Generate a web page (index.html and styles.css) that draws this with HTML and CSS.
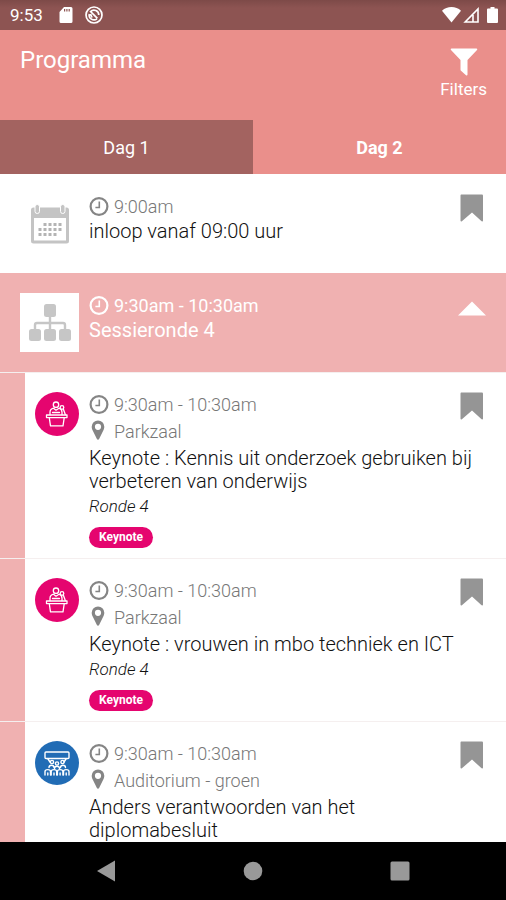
FILE: index.html
```html
<!DOCTYPE html>
<html lang="nl">
<head>
<meta charset="utf-8">
<meta name="viewport" content="width=device-width, initial-scale=1">
<title>Programma</title>
<link rel="stylesheet" href="styles.css">
</head>
<body>
<svg class="sprite" aria-hidden="true">
  <symbol id="clock" viewBox="0 0 20 20"><circle cx="10" cy="9.500" r="8.400" fill="none" stroke="currentColor" stroke-width="2.200"/><path d="M10.300 4.500v6H6.400" fill="none" stroke="currentColor" stroke-width="1.600"/></symbol>
  <symbol id="pin" viewBox="0 0 20 20"><path fill="currentColor" fill-rule="evenodd" d="M9 .5a6.300 6.300 0 0 1 6.300 6.300c0 1.600-.5 2.700-1 3.700L10.100 19c-.4 1-1.800 1-2.200 0L3.700 10.500c-.5-1-1-2.100-1-3.700A6.300 6.300 0 0 1 9 .5zm0 3.200a3.100 3.100 0 1 0 0 6.200 3.100 3.100 0 0 0 0-6.200z"/></symbol>
  <symbol id="bookmark" viewBox="0 0 24 28"><path fill="currentColor" d="M1.500.5h20.200c.8 0 1.300.5 1.300 1.300v24.600c0 .9-1 1.300-1.700.7L12 18.500 2.200 27.100C1.500 27.700.5 27.300.5 26.400V1.800C.5 1 .8.500 1.500.5z"/></symbol>
  <symbol id="speaker" viewBox="0 0 44 44"><g fill="none" stroke="#fff" stroke-width="1.300" stroke-linejoin="round" stroke-linecap="round"><circle cx="21" cy="12.700" r="2.700"/><path d="M15 22.700v-2.500c0-2 1.500-3.500 3.500-4l2.500 2 3-2c2 .6 3 2 3 4v2.500M17.500 20.500h7"/><circle cx="27" cy="15.500" r="1.800"/><path d="M28.500 17.500l1.800 5"/><path d="M11.500 23h20.500v2.600H11.500zM14.300 25.800l1.200 8h12.500l1.200-8"/></g></symbol>
  <symbol id="audience" viewBox="0 0 44 44"><g fill="none" stroke="#fff" stroke-width="1.400" stroke-linejoin="round" stroke-linecap="round"><rect x="10" y="11" width="24" height="6.500" rx="1"/><path d="M13 18l2 3M31 18l-2 3"/><circle cx="17" cy="21" r="1.600"/><circle cx="22" cy="22.500" r="1.600"/><circle cx="27.500" cy="21" r="1.600"/><path d="M14 26.500c0-3 5-3 5 0M19.500 27.500c0-3 5-3 5 0M25.500 26.500c0-3 5-3 5 0"/><path d="M10 34v-3.500c0-2.500 5.500-2.500 5.500 0V34M12.800 34v-2M16.200 34v-3.500c0-2.500 5.500-2.500 5.500 0V34M19 34v-2M22.400 34v-3.500c0-2.500 5.500-2.500 5.500 0V34M25.100 34v-2M28.500 34v-3.500c0-2.500 5.500-2.500 5.500 0V34M31.200 34v-2"/></g></symbol>
</svg>

<div class="status">
  <span class="status-time">9:53</span>
  <svg width="14" height="16" viewBox="0 0 14 16"><path fill="#fff" fill-rule="evenodd" d="M5 0h7a1.500 1.500 0 0 1 1.500 1.500v13A1.500 1.500 0 0 1 12 16H2A1.500 1.500 0 0 1 .5 14.500V5zM5 2v2.500h1.200V2zm2.300 0v2.500h1.200V2zm2.300 0v2.500h1.200V2z"/></svg>
  <svg class="status-sync" width="18" height="18" viewBox="0 0 18 18"><g fill="none" stroke="#fff" stroke-width="1.700"><circle cx="9" cy="9" r="8"/><path d="M13.800 9A4.800 4.800 0 0 0 5.600 5.600l6.800 6.800M4.300 8A4.800 4.800 0 0 0 12 12.800M7 11.500 5.500 8"/></g></svg>
  <span class="status-right">
    <svg width="19" height="16" viewBox="0 0 19 16"><path fill="#fff" d="M0 3.800C5-1.200 14-1.200 19 3.800L9.500 15.500z"/></svg>
    <svg width="16" height="16" viewBox="0 0 16 16"><path d="M15 2v13H2.200zM10 8v7" fill="none" stroke="#fff" stroke-width="1.600"/></svg>
    <svg class="battery" width="11" height="16" viewBox="0 0 11 16"><path fill="#fff" d="M3.500 0h4v1.500H10a1 1 0 0 1 1 1V15a1 1 0 0 1-1 1H1a1 1 0 0 1-1-1V2.500a1 1 0 0 1 1-1h2.500z"/></svg>
  </span>
</div>

<header class="header">
  <h1>Programma</h1>
  <button class="filters" type="button">
    <svg width="28" height="28" viewBox="0 0 28 28"><path fill="#fff" d="M1.500.5h25c.8 0 1 .8.500 1.400L17.500 12v14.500c0 .9-.8 1.200-1.500.7l-5-4.400c-.4-.3-.5-.7-.5-1.200V12L1 1.900C.5 1.300.7.500 1.500.5z"/></svg>
    <span>Filters</span>
  </button>
</header>

<nav class="tabs">
  <button type="button" class="tab tab-shaded">Dag 1</button>
  <button type="button" class="tab tab-bold">Dag 2</button>
</nav>

<main class="list">
  <article class="row">
    <div class="tile">
      <svg width="40" height="40" viewBox="0 0 40 40"><path fill="#c4c4c4" fill-rule="evenodd" d="M3.500 3.500h33A2.500 2.500 0 0 1 39 6v31a2.500 2.500 0 0 1-2.500 2.500h-33A2.500 2.500 0 0 1 1 37V6a2.500 2.500 0 0 1 2.500-2.500zM4 14v22.500h32V14z"/><g fill="#c4c4c4" stroke="#fff"><rect x="5" y=".5" width="4.500" height="9" rx="2.200"/><rect x="30.500" y=".5" width="4.500" height="9" rx="2.200"/></g><g stroke="#b4b4b4" stroke-width="3" stroke-dasharray="3 2"><path d="M13.500 20.500h18M8.500 25.500h23M8.500 30.500h18"/></g></svg>
    </div>
    <div class="body">
      <p class="meta"><svg><use href="#clock"/></svg>9:00am</p>
      <h2>inloop vanaf 09:00 uur</h2>
    </div>
    <button class="mark" type="button" aria-label="Bewaar"><svg><use href="#bookmark"/></svg></button>
  </article>

  <section class="row session">
    <div class="tile tile-white">
      <svg width="44" height="38" viewBox="0 0 44 38"><g fill="#c6c6c6"><rect x="16" y="0" width="12" height="13" rx="2.500"/><rect x="1" y="25" width="12" height="12" rx="2.500"/><rect x="16" y="25" width="12" height="12" rx="2.500"/><rect x="31" y="25" width="12" height="12" rx="2.500"/></g><path d="M22 12v14M7 26v-5a2 2 0 0 1 2-2h26a2 2 0 0 1 2 2v5" fill="none" stroke="#c6c6c6" stroke-width="2.400"/></svg>
    </div>
    <div class="body">
      <p class="meta"><svg><use href="#clock"/></svg>9:30am - 10:30am</p>
      <h2>Sessieronde 4</h2>
    </div>
    <button class="mark" type="button" aria-label="Inklappen"><svg viewBox="0 0 30 28"><path fill="#fff" d="M15 8l15 15H0z"/></svg></button>
  </section>

  <article class="row item">
    <svg class="avatar pink"><use href="#speaker"/></svg>
    <div class="body">
      <p class="meta"><svg><use href="#clock"/></svg>9:30am - 10:30am</p>
      <p class="meta place"><svg><use href="#pin"/></svg>Parkzaal</p>
      <h2>Keynote : Kennis uit onderzoek gebruiken bij verbeteren van onderwijs</h2>
      <p class="round">Ronde 4</p>
      <span class="badge">Keynote</span>
    </div>
    <button class="mark" type="button" aria-label="Bewaar"><svg><use href="#bookmark"/></svg></button>
  </article>

  <article class="row item">
    <svg class="avatar pink"><use href="#speaker"/></svg>
    <div class="body">
      <p class="meta"><svg><use href="#clock"/></svg>9:30am - 10:30am</p>
      <p class="meta place"><svg><use href="#pin"/></svg>Parkzaal</p>
      <h2>Keynote : vrouwen in mbo techniek en ICT</h2>
      <p class="round">Ronde 4</p>
      <span class="badge">Keynote</span>
    </div>
    <button class="mark" type="button" aria-label="Bewaar"><svg><use href="#bookmark"/></svg></button>
  </article>

  <article class="row item">
    <svg class="avatar blue"><use href="#audience"/></svg>
    <div class="body">
      <p class="meta"><svg><use href="#clock"/></svg>9:30am - 10:30am</p>
      <p class="meta place"><svg><use href="#pin"/></svg>Auditorium - groen</p>
      <h2>Anders verantwoorden van het<br>diplomabesluit</h2>
    </div>
    <button class="mark" type="button" aria-label="Bewaar"><svg><use href="#bookmark"/></svg></button>
  </article>
</main>

<footer class="keys">
  <button type="button" aria-label="Terug"><svg width="20" height="22" viewBox="0 0 20 22"><path fill="#999" d="M19 .5v21L1 11z"/></svg></button>
  <button type="button" aria-label="Start"><svg width="20" height="20" viewBox="0 0 20 20"><circle cx="10" cy="10" r="9.300" fill="#999"/></svg></button>
  <button type="button" aria-label="Recent"><svg width="20" height="20" viewBox="0 0 20 20"><rect x=".5" y=".5" width="19" height="19" rx="1.500" fill="#999"/></svg></button>
</footer>
</body>
</html>
```

FILE: styles.css
```css
* { box-sizing: border-box; }
body {
  margin: 0;
  height: 100vh;
  display: flex;
  flex-direction: column;
  font-family: Roboto, "Liberation Sans", sans-serif;
  background: #fff;
  color: #111;
}
h1, h2, p { margin: 0; font-weight: 400; }
button {
  margin: 0;
  padding: 0;
  border: 0;
  background: none;
  color: inherit;
  font: inherit;
}
svg { display: block; flex: none; }
.sprite { position: absolute; width: 0; height: 0; }

.status {
  flex: none;
  height: 30px;
  padding: 0 8px 0 10px;
  display: flex;
  align-items: center;
  background: linear-gradient(#7d4a48, #8d5452 8px);
  color: #fff;
}
.status-time { width: 49px; font-size: 17px; }
.status-sync { margin-left: 12px; }
.status-right { margin-left: auto; display: flex; gap: 2px; }
.battery { margin-left: 6px; }

.header {
  flex: none;
  height: 90px;
  padding: 16px 19px 0 20px;
  display: flex;
  justify-content: space-between;
  align-items: flex-start;
  background: #ea8f8b;
  color: #fff;
}
h1 { font-size: 24px; line-height: 29px; }
.filters {
  display: flex;
  flex-direction: column;
  align-items: center;
  gap: 3px;
  margin-top: 2px;
  font-size: 17px;
  line-height: 20px;
}

.tabs { flex: none; height: 54px; display: flex; background: #ea8f8b; color: #fff; }
.tab { flex: 1; font-size: 18px; }
.tab-shaded { background: #a36360; }
.tab-bold { font-weight: 700; }

.list { flex: 1; min-height: 0; overflow-y: auto; scrollbar-width: none; }
.row { display: flex; align-items: flex-start; gap: 10px; padding: 20px; }
.tile { flex: none; width: 59px; height: 59px; display: grid; place-items: center; }
.tile-white { background: #fff; }
.body { flex: 1; min-width: 0; }
.meta {
  display: flex;
  align-items: center;
  gap: 5px;
  font-size: 18px;
  line-height: 25px;
  font-weight: 300;
  color: #777;
}
.meta svg { width: 20px; height: 20px; color: #858585; }
.place { line-height: 30px; }
.place svg { margin-bottom: 4px; }
h2 { margin-top: 1px; font-size: 20px; line-height: 23px; font-weight: 300; }
.mark { flex: none; color: #959595; }
.mark svg { width: 28px; height: 28px; }

.session { background: #f0b1b1; color: #fff; }
.session .meta, .session .meta svg { color: #fff; }
.session .meta, .session h2 { font-weight: 400; }

.item {
  padding: 19px 20px 10px 35px;
  border-top: 1px solid #f5efef;
  background: linear-gradient(to right, #f0b1b1 25px, #fff 25px);
}
.item .body { margin-right: -38px; }
.item h2 { margin-top: 0; }
.avatar { width: 44px; height: 44px; border-radius: 50%; }
.pink { background: #e5056f; }
.blue { background: #216cb5; }
.round { font-size: 17px; line-height: 26px; font-style: italic; font-weight: 300; }
.badge {
  display: block;
  width: fit-content;
  margin-top: 8px;
  padding: 0 10px;
  border-radius: 11px;
  background: #e5056f;
  color: #fff;
  font-size: 12px;
  line-height: 21px;
  font-weight: 700;
}

.keys {
  flex: none;
  height: 58px;
  padding: 0 33px;
  display: grid;
  grid-template-columns: repeat(3, 1fr);
  background: #000;
}
.keys button { display: grid; place-items: center; }
```
